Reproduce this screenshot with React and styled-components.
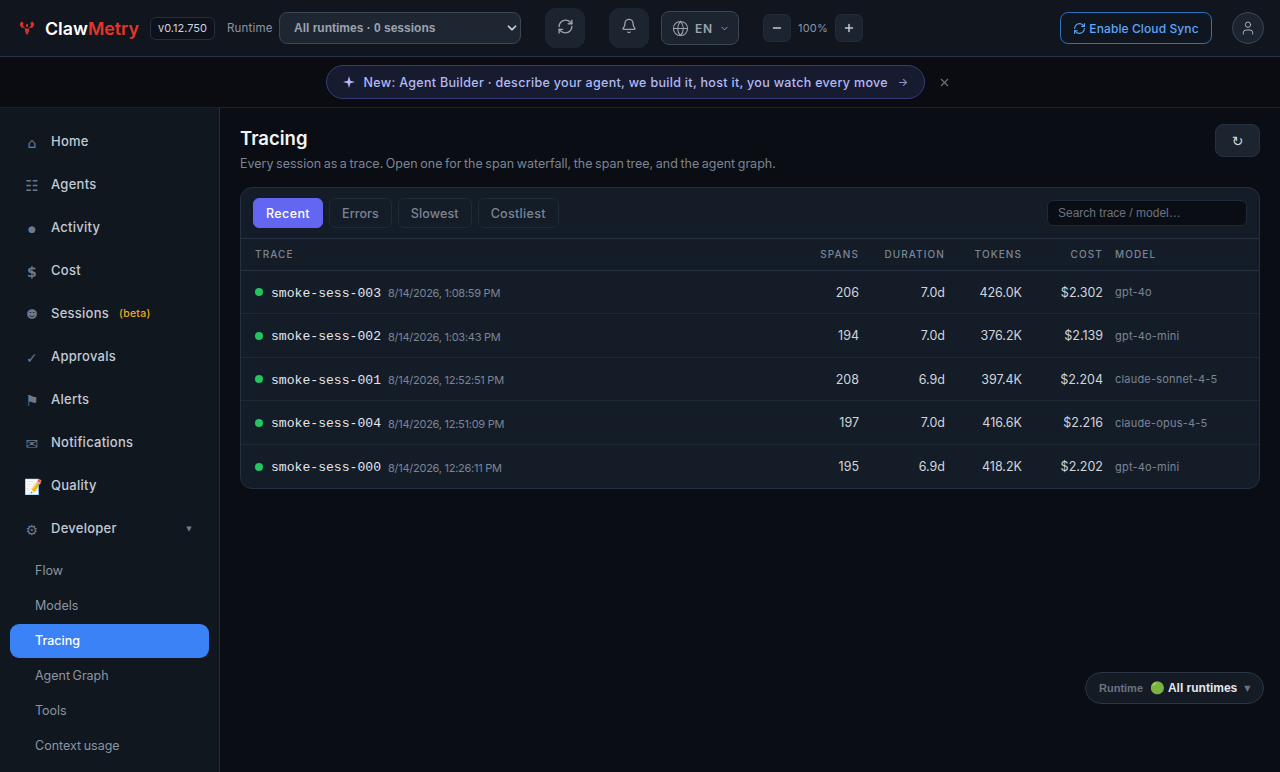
import React from 'react';
import styled, { createGlobalStyle } from 'styled-components';
import { RefreshCw, Bell, Globe, ChevronDown, Minus, Plus, User, X } from 'lucide-react';

const Global = createGlobalStyle`
  html, body { margin: 0; height: 100%; background: #0a0e14; overflow: hidden; }
  #root { height: 100%; }
  * { box-sizing: border-box; }
  body { font-family: Inter, "Noto Sans", sans-serif; color: #e5e7eb; }
`;

const Page = styled.div`
  width: 1280px; height: 772px; display: flex; flex-direction: column; overflow: hidden; position: relative;
  background: #0a0e14;
`;
const TopBar = styled.header`
  height: 57px; flex: none; display: flex; align-items: center; padding: 0 16px 0 19px;
  background: #10151e; border-bottom: 1px solid #283347;
`;
const Logo = styled.div`
  display: flex; align-items: center; font-size: 17.8px; font-weight: 600; color: #fff; width: 131px; gap: 10px;
  span em { font-style: normal; color: #e5352b; }
`;
const Version = styled.div`
  width: 65px; height: 23px; border: 1px solid #243041; border-radius: 6px; background: #0d1119;
  font-size: 11px; color: #cbd5e1; display: flex; align-items: center; justify-content: center;
`;
const RuntimeLabel = styled.div`
  margin-left: 12px; width: 52px; font-size: 11.5px; color: #8b95a5; letter-spacing: 0.2px;
`;
const RuntimeSelect = styled.div`
  width: 242px; height: 32px; border: 1px solid #3c4654; border-radius: 8px; background: #1e2632;
  display: flex; align-items: center; justify-content: space-between; padding: 0 1px 0 14px;
  font-family: "Liberation Sans", sans-serif; font-size: 12px; font-weight: 700; color: #9ca3af;
  svg { color: #cbd5e1; }
`;
const SquareBtn = styled.button`
  width: 40px; height: 40px; padding: 0 0 4px; border: 1px solid #1c2531; border-radius: 10px; background: #1c2430;
  color: #9ca3af; display: flex; align-items: center; justify-content: center;
  margin-left: ${p => p.$ml}px;
`;
const LangBtn = styled.div`
  margin-left: 12px; width: 78px; height: 34px; border: 1px solid #3c4654; border-radius: 8px; background: #1c2430;
  display: flex; align-items: center; padding-left: 10px; gap: 6px; font-size: 12px; font-weight: 600; letter-spacing: 0.8px; color: #9ca3af;
`;
const ZoomBtn = styled.div`
  width: 28px; height: 28px; border: 1px solid #222b38; border-radius: 6px; background: #1c2430;
  display: flex; align-items: center; justify-content: center; color: #c3cad5;
  margin-left: ${p => p.$ml || 0}px;
`;
const ZoomText = styled.div`
  width: 44px; text-align: center; font-size: 11px; color: #8b95a5; letter-spacing: 0.2px;
`;
const Spacer = styled.div`flex: 1;`;
const CloudBtn = styled.div`
  width: 152px; height: 32px; border: 1px solid #2f6fc0; border-radius: 8px; background: #0f1620;
  color: #60a5fa; font-size: 12px; font-weight: 500; letter-spacing: 0.1px; display: flex; align-items: center; justify-content: center; gap: 3px;
`;
const Avatar = styled.div`
  margin-left: 20px; width: 32px; height: 32px; border: 1px solid #3c4654; border-radius: 50%; background: #1c2430;
  display: flex; align-items: center; justify-content: center; color: #aab2bf;
`;
const Banner = styled.div`
  height: 51px; flex: none; display: flex; align-items: center; justify-content: center;
  padding-right: 3px; gap: 13px;
  background: #0a0c12; border-bottom: 1px solid #1a2230;
`;
const Pill = styled.div`
  width: 599px; height: 34px; border: 1px solid #343c78; border-radius: 17px; background: #171b30;
  display: flex; align-items: center; padding: 0 15px; gap: 8px; color: #b1baf5;
  font-size: 12.5px; font-weight: 500; letter-spacing: 0.31px; white-space: nowrap;
`;
const PillArrow = styled.span`margin-left: auto; color: #8b95c9; font-size: 11px;`;
const Close = styled.div`width: 14px; display: flex; color: #6b7280;`;
const Body = styled.div`flex: 1; display: flex; min-height: 0;`;
const Sidebar = styled.aside`
  width: 220px; flex: none; background: #10171f; border-right: 1px solid #232c3a; padding: 11px 10px 0; overflow: hidden;
`;
const NavItem = styled.div`
  height: 43px; display: flex; align-items: center; padding-left: 14px; font-size: 13px; font-weight: 450; color: #c3cad5; letter-spacing: 0.25px;
`;
const NavIcon = styled.span`
  width: 16px; margin-right: 11px; text-align: center; font-size: ${p => p.$size || 14}px; font-weight: ${p => (p.$bold ? 700 : 400)};
  color: #6b7a8f; font-family: "DejaVu Sans", sans-serif; padding-top: 5px; line-height: 14px; flex: none;
`;
const Beta = styled.span`margin-left: 10px; padding-top: 1px; color: #f0a91a; font-size: 10.5px; font-weight: 500;`;
const Caret = styled.span`margin-left: auto; margin-right: 17px; font-size: 7px; color: #6b7a8f; font-family: "DejaVu Sans", sans-serif; padding-top: 2px;`;
const SubList = styled.div`display: flex; flex-direction: column; margin-top: 4px;`;
const SubItem = styled.div`
  height: ${p => (p.$active ? 34 : 35)}px; margin-top: ${p => (p.$active ? 1 : 0)}px; padding-bottom: ${p => (p.$active ? 2 : 0)}px;
  border-radius: 9px; padding-left: 25px; display: flex; align-items: center; word-spacing: -1px;
  font-size: 12.5px; color: ${p => (p.$active ? '#fff' : '#8b95a5')}; font-weight: ${p => (p.$active ? 500 : 400)};
  background: ${p => (p.$active ? '#3b82f6' : 'transparent')};
`;
const Main = styled.main`flex: 1; padding: 16px 20px; min-width: 0; background: linear-gradient(180deg, #0a0d13, #0a0e14);`;
const HeadRow = styled.div`display: flex; justify-content: space-between; align-items: flex-start; height: 63px;`;
const Title = styled.h1`margin: 1px 0 0; font-size: 18.5px; line-height: 26px; font-weight: 600; color: #f3f4f6;`;
const Sub = styled.p`margin: 4px 0 0; font-size: 12.5px; line-height: 17px; color: #7b8595; word-spacing: -0.95px;`;
const RefreshBtn = styled.div`
  width: 45px; height: 33px; border: 1px solid #263041; border-radius: 8px; background: #1c2430; color: #d1d5db;
  display: flex; align-items: center; justify-content: center; font-size: 14px; font-family: "DejaVu Sans", sans-serif;
`;
const Card = styled.section`border: 1px solid #263041; border-radius: 12px; background: #141c28; overflow: hidden;`;
const Toolbar = styled.div`height: 51px; display: flex; align-items: center; padding: 0 12px; gap: 6px; border-bottom: 1px solid #263041;`;
const Tab = styled.div`
  height: 30px; padding: 0 12px; border-radius: 6px; border: 1px solid ${p => (p.$active ? '#6366f1' : '#1f2937')};
  background: ${p => (p.$active ? '#6366f1' : 'transparent')}; color: ${p => (p.$active ? '#fff' : '#7b8595')};
  font-size: 12.5px; font-weight: 500; display: flex; align-items: center; letter-spacing: ${p => p.$ls}px;
`;
const Search = styled.input`
  margin-left: auto; width: 200px; height: 26px; border: 1px solid #1f2937; border-radius: 6px; background: #0a0e14; padding: 0 10px;
  font-family: "Liberation Sans", sans-serif; font-size: 12px; color: #e5e7eb; outline: none;
  &::placeholder { color: #6b7280; opacity: 1; }
`;
const Grid = styled.div`
  display: grid; grid-template-columns: 1fr 70px 86px 77px 81px 156px; align-items: center;
  height: ${p => p.$h}px; padding-left: 14px; border-bottom: ${p => (p.$last ? 'none' : '1px solid #1e2836')};
`;
const HeadGrid = styled(Grid)`border-bottom-color: #263041; padding-bottom: 2px;`;
const Th = styled.div`
  font-size: 10px; font-weight: 500; letter-spacing: 1.1px; color: #7b8595; text-align: ${p => (p.$left ? 'left' : 'right')};
  ${p => p.$pad && 'padding-left: 12px;'}
`;
const TraceCell = styled.div`display: flex; align-items: center;`;
const Dot = styled.span`width: 8px; height: 8px; border-radius: 50%; background: #22c55e; margin-right: 8px;`;
const TraceId = styled.span`font-family: "Liberation Mono", monospace; font-size: 13.1px; color: #e5e7eb; padding-top: 2px;`;
const TraceTime = styled.span`margin-left: 7px; font-size: 11px; color: #7b8595; letter-spacing: -0.26px; padding-top: 2px;`;
const Td = styled.div`font-size: 12.5px; color: #d1d5db; text-align: right;`;
const ModelTd = styled.div`font-size: 11px; color: #7b8595; padding-left: 12px; letter-spacing: 0.2px;`;
const Float = styled.div`
  position: absolute; right: 16px; bottom: 68px; width: 179px; height: 32px; border: 1px solid #2a3442; border-radius: 16px; background: #141b25;
  display: flex; align-items: center; padding-left: 13px; font-family: "Liberation Sans", sans-serif; font-size: 11px; font-weight: 700; color: #6b7280;
`;
const FloatValue = styled.span`margin-left: 7px; font-size: 12px; color: #e5e7eb;`;
const FloatCaret = styled.span`margin-left: 7px; font-size: 8px; color: #6b7280; font-family: "DejaVu Sans", sans-serif;`;

const nav = [
  { icon: '⌂', label: 'Home' }, { icon: '☷', label: 'Agents', size: 15 }, { icon: '●', label: 'Activity', size: 9 },
  { icon: '$', label: 'Cost', bold: true }, { icon: '☻', label: 'Sessions', size: 11, beta: true },
  { icon: '✓', label: 'Approvals', bold: true }, { icon: '⚑', label: 'Alerts', size: 15 }, { icon: '✉', label: 'Notifications', size: 15 }, { icon: '📝', label: 'Quality', size: 15 },
];
const subs = ['Flow', 'Models', 'Tracing', 'Agent Graph', 'Tools', 'Context usage'];
const rows = [
  ['smoke-sess-003', '8/14/2026, 1:08:59 PM', '206', '7.0d', '426.0K', '$2.302', 'gpt-4o', 43],
  ['smoke-sess-002', '8/14/2026, 1:03:43 PM', '194', '7.0d', '376.2K', '$2.139', 'gpt-4o-mini', 44],
  ['smoke-sess-001', '8/14/2026, 12:52:51 PM', '208', '6.9d', '397.4K', '$2.204', 'claude-sonnet-4-5', 43],
  ['smoke-sess-004', '8/14/2026, 12:51:09 PM', '197', '7.0d', '416.6K', '$2.216', 'claude-opus-4-5', 44],
  ['smoke-sess-000', '8/14/2026, 12:26:11 PM', '195', '6.9d', '418.2K', '$2.202', 'gpt-4o-mini', 43],
];

const ClawLogo = () => (
  <svg width="16" height="14" viewBox="0 0 16 14" fill="#d9302a">
    <path d="M1 2 L3 0.5 L4.5 2 L4 5 L6.5 6.5 L3 7 L1 4.5 Z" />
    <path d="M15 2 L13 0.5 L11.5 2 L12 5 L9.5 6.5 L13 7 L15 4.5 Z" />
    <path d="M5.5 7.5 L10.5 7.5 L9 13 L8 13.5 L7 13 Z" />
    <rect x="7" y="3" width="2" height="3" rx="1" />
  </svg>
);

export default function App() {
  return (
    <Page>
      <Global />
      <TopBar>
        <Logo><ClawLogo /><span>Claw<em>Metry</em></span></Logo>
        <Version>v0.12.750</Version>
        <RuntimeLabel>Runtime</RuntimeLabel>
        <RuntimeSelect>All runtimes · 0 sessions <ChevronDown size={14} strokeWidth={3} /></RuntimeSelect>
        <SquareBtn $ml={24}><RefreshCw size={17} /></SquareBtn>
        <SquareBtn $ml={24}><Bell size={16} /></SquareBtn>
        <LangBtn><Globe size={17} strokeWidth={1.5} />EN<ChevronDown size={11} /></LangBtn>
        <ZoomBtn $ml={24}><Minus size={12} strokeWidth={3} /></ZoomBtn>
        <ZoomText>100%</ZoomText>
        <ZoomBtn><Plus size={12} strokeWidth={3} /></ZoomBtn>
        <Spacer />
        <CloudBtn><RefreshCw size={13} />Enable Cloud Sync</CloudBtn>
        <Avatar><User size={16} strokeWidth={1.5} /></Avatar>
      </TopBar>
      <Banner>
        <Pill>
          <svg width="14" height="14" viewBox="0 0 14 14" fill="#b1baf5"><path d="M7 1 L8.3 5.7 L13 7 L8.3 8.3 L7 13 L5.7 8.3 L1 7 L5.7 5.7 Z" /></svg>
          <span>New: Agent Builder · describe your agent, we build it, host it, you watch every move</span>
          <PillArrow>→</PillArrow>
        </Pill>
        <Close><X size={13} /></Close>
      </Banner>
      <Body>
        <Sidebar>
          {nav.map(n => (
            <NavItem key={n.label}>
              <NavIcon $size={n.size} $bold={n.bold}>{n.icon}</NavIcon>{n.label}{n.beta && <Beta>(beta)</Beta>}
            </NavItem>
          ))}
          <NavItem><NavIcon>⚙</NavIcon>Developer<Caret>▼</Caret></NavItem>
          <SubList>
            {subs.map(s => <SubItem key={s} $active={s === 'Tracing'}>{s}</SubItem>)}
          </SubList>
        </Sidebar>
        <Main>
          <HeadRow>
            <div>
              <Title>Tracing</Title>
              <Sub>Every session as a trace. Open one for the span waterfall, the span tree, and the agent graph.</Sub>
            </div>
            <RefreshBtn>↻</RefreshBtn>
          </HeadRow>
          <Card>
            <Toolbar>
              <Tab $active $ls={0.4}>Recent</Tab><Tab $ls={0.1}>Errors</Tab><Tab $ls={0.1}>Slowest</Tab><Tab $ls={0.32}>Costliest</Tab>
              <Search placeholder="Search trace / model…" />
            </Toolbar>
            <HeadGrid $h={32}>
              <Th $left>TRACE</Th><Th>SPANS</Th><Th>DURATION</Th><Th>TOKENS</Th><Th>COST</Th><Th $left $pad>MODEL</Th>
            </HeadGrid>
            {rows.map((r, i) => (
              <Grid key={r[0]} $h={r[7]} $last={i === rows.length - 1}>
                <TraceCell><Dot /><TraceId>{r[0]}</TraceId><TraceTime>{r[1]}</TraceTime></TraceCell>
                <Td>{r[2]}</Td><Td>{r[3]}</Td><Td>{r[4]}</Td><Td>{r[5]}</Td><ModelTd>{r[6]}</ModelTd>
              </Grid>
            ))}
          </Card>
        </Main>
      </Body>
      <Float>Runtime<FloatValue>🟢 All runtimes</FloatValue><FloatCaret>▼</FloatCaret></Float>
    </Page>
  );
}
